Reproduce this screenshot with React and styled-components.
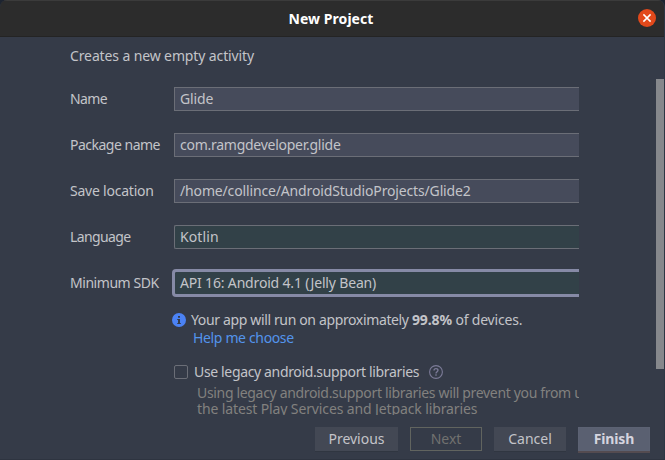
import React from 'react';
import styled, { createGlobalStyle, css } from 'styled-components';

const GlobalStyle = createGlobalStyle`
  * { box-sizing: border-box; }
  html, body { margin: 0; background: #1d2430; }
  body { overflow: hidden; }
  button { font: inherit; margin: 0; }
`;

const Dialog = styled.main`
  display: flex;
  flex-direction: column;
  width: 665px;
  height: 460px;
  overflow: hidden;
  border-radius: 7px 7px 0 0;
  border-right: 1px solid #2c3644;
  border-bottom: 1px solid #2e3440;
  background: #353b48;
  color: #c3c4c9;
  font: 14px/18px "Noto Sans", sans-serif;
  white-space: nowrap;
`;

const TitleBar = styled.header`
  flex: none;
  display: grid;
  grid-template-columns: 1fr auto 1fr;
  align-items: center;
  height: 37px;
  padding: 0 8px 0 6px;
  margin-right: -1px;
  background: #2c2c2c;
  border-top: 1px solid #3b3b3b;
  border-bottom: 1px solid #242424;
  color: #fff;
`;

const Title = styled.h1`
  grid-column: 2;
  margin: 0 1px 0 0;
  font-size: 14px;
  font-weight: 700;
`;

const CloseButton = styled.button`
  grid-column: 3;
  justify-self: end;
  display: block;
  width: 20px;
  height: 20px;
  padding: 0;
  border: 0;
  background: none;

  svg { display: block; }
`;

const Content = styled.div`
  flex: none;
  display: flex;
  height: 378px;
  overflow: hidden;
`;

const Form = styled.section`
  width: 579px;
  padding: 10px 0 0 70px;
  overflow: hidden;
`;

const Description = styled.p`
  margin: 0 0 20px;
`;

const Fields = styled.div`
  display: grid;
  grid-template-columns: 104px 1fr;
  grid-auto-rows: 28px;
  row-gap: 18px;
  align-items: center;
`;

const Field = styled.div`
  display: flex;
  align-items: center;
  height: 24px;
  padding-left: 5px;
  border: 1px solid #6b6e77;
  border-right: 0;
  background: #464b5b;
  ${({ $select }) => $select && css`
    border-radius: 2px 0 0 2px;
    background: #324148;
  `}
  ${({ $focused }) => $focused && css`
    height: 28px;
    margin-left: -2px;
    border: 3px solid #868aa6;
    border-right: 0;
    border-radius: 4px 0 0 4px;
  `}
`;

const Text = styled.span`
  letter-spacing: ${({ $track = 0 }) => $track}px;
`;

const InfoRow = styled.div`
  display: grid;
  grid-template-columns: 19px 1fr;
  align-items: center;
  padding: 14px 0 0 2px;

  svg { display: block; }
`;

const HelpLink = styled.a`
  grid-column: 2;
  padding-left: 2px;
  color: #5394ec;
`;

const Notes = styled.div`
  padding-left: 100px;
`;

const CheckRow = styled.label`
  display: flex;
  align-items: center;
  height: 18px;
  margin: 16px 0 0 4px;
`;

const CheckBox = styled.span`
  width: 14px;
  height: 14px;
  margin-right: 6px;
  border: 1px solid #6b6e77;
  border-radius: 2px;
`;

const HelpIcon = styled.svg`
  margin-left: 10px;
`;

const Hint = styled.p`
  margin: 4px 0 0 27px;
  color: #82817f;
  line-height: 16px;
`;

const Scrollbar = styled.div`
  width: 8px;
  height: 290px;
  margin: 42px 0 0 auto;
  background: #86888c;
`;

const Footer = styled.footer`
  display: flex;
  justify-content: flex-end;
  gap: 12px;
  padding: 12px 14px 0 0;
`;

const variants = {
  normal: css`
    border-color: #434854;
    background: #434854;
    box-shadow: 0 1px 0 #303641;
  `,
  disabled: css`
    border-color: #61645f;
    background: transparent;
    color: #71716f;
  `,
  primary: css`
    border-color: #5c6273;
    background: #5a6071;
    color: #d5d4df;
    font-weight: 700;
    box-shadow: 0 2px 0 #544b50;
  `,
};

const Button = styled.button`
  width: ${({ $wide }) => ($wide ? 83 : 72)}px;
  height: 24px;
  padding: 0;
  border: 1px solid;
  color: #c3c4c9;
  line-height: 20px;
  ${({ $variant = 'normal' }) => variants[$variant]}
`;

const fields = [
  { label: 'Name', labelTrack: -0.6, value: 'Glide', track: -0.15 },
  { label: 'Package name', labelTrack: -0.5, value: 'com.ramgdeveloper.glide', track: -0.26 },
  { label: 'Save location', labelTrack: -0.22, value: '/home/collince/AndroidStudioProjects/Glide2', track: -0.15 },
  { label: 'Language', labelTrack: -0.6, value: 'Kotlin', track: 0.1 },
  { label: 'Minimum SDK', labelTrack: -0.45, value: 'API 16: Android 4.1 (Jelly Bean)', track: -0.17, focused: true },
].map((f, i) => ({ ...f, select: i >= 3 }));

export default function App() {
  return (
    <>
      <GlobalStyle />
      <Dialog>
        <TitleBar>
          <Title><Text $track={0.05}>New Project</Text></Title>
          <CloseButton aria-label="Close">
            <svg width="20" height="20" viewBox="0 0 20 20">
              <circle cx="10" cy="9" r="9" fill="#e2491b" />
              <path d="M6.4 5.4l7.2 7.2M13.6 5.4l-7.2 7.2" stroke="#fff" strokeWidth="1.5" />
            </svg>
          </CloseButton>
        </TitleBar>
        <Content>
          <Form>
            <Description><Text $track={-0.12}>Creates a new empty activity</Text></Description>
            <Fields>
              {fields.map((f) => (
                <React.Fragment key={f.label}>
                  <Text $track={f.labelTrack}>{f.label}</Text>
                  <Field $select={f.select} $focused={f.focused}>
                    <Text $track={f.track}>{f.value}</Text>
                  </Field>
                </React.Fragment>
              ))}
            </Fields>
            <Notes>
              <InfoRow>
                <svg width="14" height="14" viewBox="0 0 14 14">
                  <circle cx="7" cy="7" r="7" fill="#4b82f4" />
                  <path d="M6 3h2v1.8H6zM5.2 6H8v4h.8v1H5.2v-1H6V7h-.8z" fill="#353b48" />
                </svg>
                <span>
                  <Text $track={-0.36}>Your app will run on approximately </Text>
                  <Text as="b" $track={-0.1}>99.8%</Text>
                  <Text $track={-0.2}> of devices.</Text>
                </span>
                <HelpLink><Text $track={-0.35}>Help me choose</Text></HelpLink>
              </InfoRow>
              <CheckRow>
                <CheckBox />
                <Text $track={-0.35}>Use legacy android.support libraries</Text>
                <HelpIcon width="14" height="14" viewBox="0 0 14 14" fill="none" stroke="#7c7b98">
                  <circle cx="7" cy="7" r="6.4" strokeWidth="1.1" />
                  <path d="M5 5.5C5 4.3 5.8 3.6 7 3.6s2 .7 2 1.7c0 1.3-2 1.5-2 3.1M7 9.3v1.4" strokeWidth="1.3" />
                </HelpIcon>
              </CheckRow>
              <Hint>
                <Text $track={-0.33}>Using legacy android.support libraries will prevent you from using</Text>
                <br />
                <Text $track={-0.12}>the latest Play Services and Jetpack libraries</Text>
              </Hint>
            </Notes>
          </Form>
          <Scrollbar />
        </Content>
        <Footer>
          <Button $wide>Previous</Button>
          <Button $variant="disabled">Next</Button>
          <Button>Cancel</Button>
          <Button $variant="primary"><Text $track={-0.15}>Finish</Text></Button>
        </Footer>
      </Dialog>
    </>
  );
}
